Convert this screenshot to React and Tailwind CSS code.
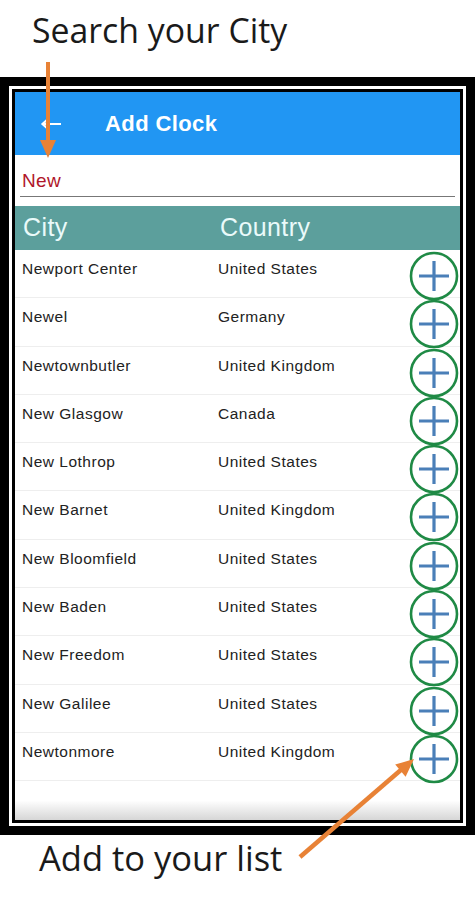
import React from "react";

const rows = [
  ["Newport Center", "United States"],
  ["Newel", "Germany"],
  ["Newtownbutler", "United Kingdom"],
  ["New Glasgow", "Canada"],
  ["New Lothrop", "United States"],
  ["New Barnet", "United Kingdom"],
  ["New Bloomfield", "United States"],
  ["New Baden", "United States"],
  ["New Freedom", "United States"],
  ["New Galilee", "United States"],
  ["Newtonmore", "United Kingdom"],
];

function AddButton() {
  return (
    <svg width="50" height="50" viewBox="0 0 50 50" className="shrink-0">
      <circle cx="25" cy="25" r="23" fill="white" stroke="#1f8a45" strokeWidth="2.6" />
      <path d="M25 10 V40 M10 25 H40" stroke="#4a7fb8" strokeWidth="3.2" strokeLinecap="butt" />
    </svg>
  );
}

export default function App() {
  return (
    <div className="relative w-[475px] h-[900px] bg-white overflow-hidden" style={{ fontFamily: "'Liberation Sans', Arial, sans-serif" }}>
      <div className="h-[77px] pl-[32px] pt-[10px] text-[33.8px] leading-[40px] text-[#1a1a1a] font-['Open_Sans',sans-serif]">
        Search your City
      </div>

      <div className="bg-black p-[9px]">
        <div className="border-[3px] border-white">
          <div className="border-[3px] border-black">
            <div className="h-[728px] bg-white flex flex-col overflow-hidden">
              <div className="h-[63px] bg-[#2196f3] flex items-center shrink-0">
                <div className="w-[90px] pl-[25px] flex items-center">
                  <svg width="22" height="14" viewBox="0 0 22 14">
                    <path d="M21 7 H3 M8 2 L2.5 7 L8 12" stroke="white" strokeWidth="2.2" fill="none" />
                  </svg>
                </div>
                <span className="text-white text-[22px] font-bold tracking-[0.4px]">Add Clock</span>
              </div>
              <div className="h-[51px] shrink-0 px-[5px] pt-[14px]">
                <div className="border-b border-[#777] h-[28px] pl-[2px] text-[#b0172a] text-[19px] leading-[23px] tracking-[0.3px]">New</div>
              </div>
              <div className="h-[44px] shrink-0 bg-[#5c9f9c] flex items-center text-[#eafafa] text-[25px] tracking-[0.4px]">
                <span className="w-[205px] pl-[8px]">City</span>
                <span>Country</span>
              </div>
              <div className="flex flex-col">
                {rows.map(([city, country], i) => (
                  <div key={i} className="h-[48.3px] shrink-0 flex border-b border-[#eeeeee] text-[15.5px] tracking-[0.5px] text-[#222] relative">
                    <span className="w-[203px] pl-[7px] pt-[7px]">{city}</span>
                    <span className="pt-[7px] flex-1">{country}</span>
                    <div className="absolute right-[1px] top-[1px] z-10">
                      <AddButton />
                    </div>
                  </div>
                ))}
              </div>
              <div className="flex-1 bg-gradient-to-b from-white from-50% to-[#d6d6d6]" />
            </div>
          </div>
        </div>
      </div>

      <div className="pl-[39px] pt-[3px] text-[34.5px] leading-[40px] text-[#1a1a1a] font-['Open_Sans',sans-serif]">
        Add to your list
      </div>

      <svg className="absolute inset-0 pointer-events-none z-20" width="475" height="900">
        <line x1="48" y1="62" x2="48" y2="142" stroke="#e88236" strokeWidth="4" />
        <polygon points="40,140 56,140 48,158" fill="#e88236" />
        <line x1="300" y1="857" x2="402" y2="769" stroke="#e88236" strokeWidth="4.5" />
        <polygon points="414,759 405.6,776.8 395.2,764.6" fill="#e88236" />
      </svg>
    </div>
  );
}
